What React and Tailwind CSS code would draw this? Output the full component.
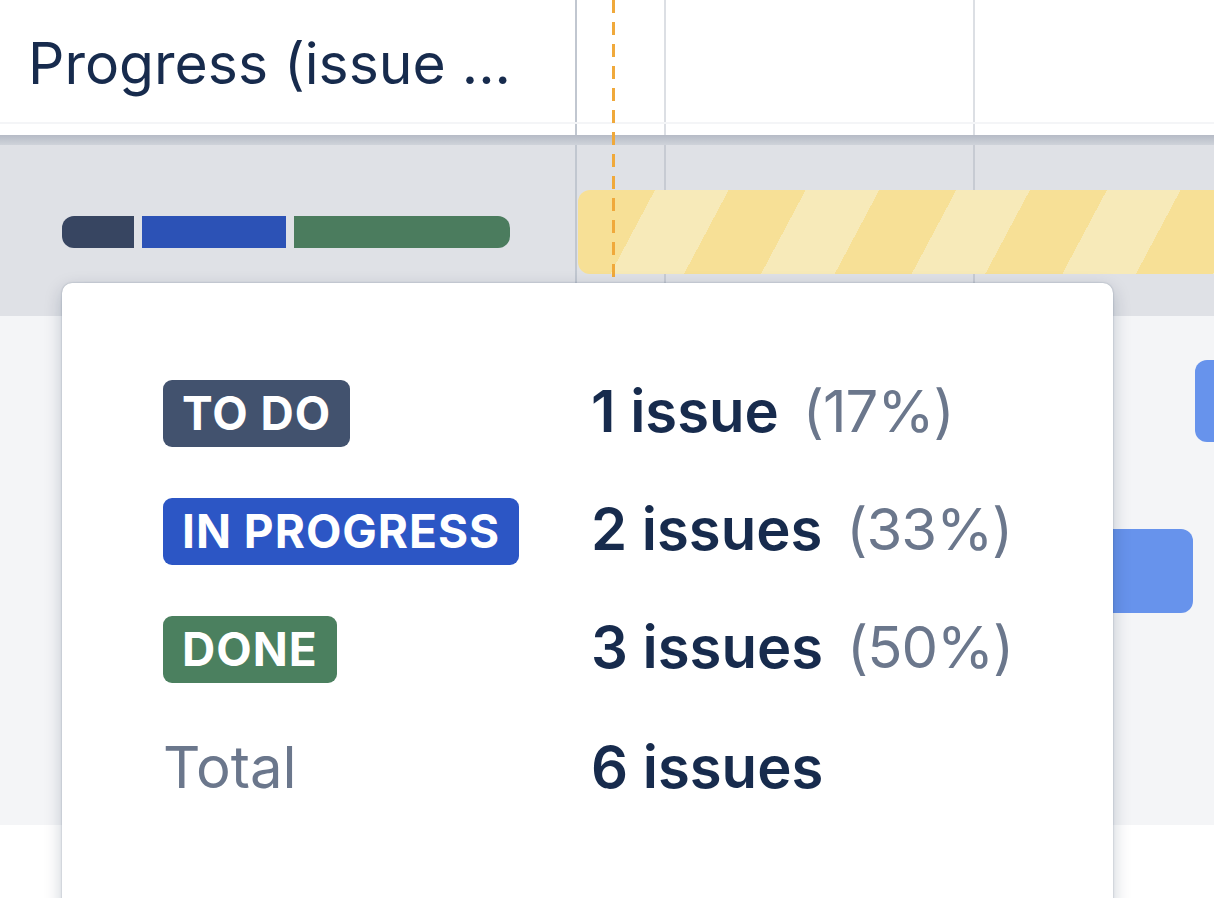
import React from 'react'

const rows = [
    { label: 'TO DO', bg: 'bg-[#42526e]', count: '1 issue', pct: '(17%)' },
    { label: 'IN PROGRESS', bg: 'bg-[#2c56c5]', count: '2 issues', pct: '(33%)' },
    { label: 'DONE', bg: 'bg-[#4b805f]', count: '3 issues', pct: '(50%)' },
]

function GridLines({ dark }) {
    const color = dark ? 'bg-[#c7cbd3]' : 'bg-[#dcdfe4]'
    return (
        <>
            <div className={`absolute left-[87px] top-0 bottom-0 w-[2px] ${color}`} />
            <div className={`absolute left-[396px] top-0 bottom-0 w-[2px] ${color}`} />
        </>
    )
}

function StatusPopup() {
    return (
        <div className="absolute left-[62px] top-[283px] w-[1051px] h-[700px] bg-white rounded-[10px] shadow-[0_6px_18px_rgba(9,30,66,0.22),0_0_2px_rgba(9,30,66,0.3)]">
            <div className="pt-[71px] pl-[101px]">
                {rows.map((r) => (
                    <div key={r.label} className="h-[118px] flex items-center">
                        <div className="w-[428px]">
                            <span className={`inline-flex items-center h-[67px] px-[19px] rounded-[9px] text-white font-bold text-[46px] tracking-[1px] leading-none ${r.bg}`}>
                                {r.label}
                            </span>
                        </div>
                        <div className="flex items-baseline text-[58px] leading-none -mt-[4px]">
                            <span className="font-semibold text-[#172b4d]">{r.count}</span>
                            <span className="ml-[24px] text-[#6b778c] tracking-[-1px]">{r.pct}</span>
                        </div>
                    </div>
                ))}
                <div className="h-[118px] flex items-center">
                    <div className="w-[428px] text-[58px] leading-none text-[#6b778c]">Total</div>
                    <div className="text-[58px] leading-none font-semibold text-[#172b4d]">6 issues</div>
                </div>
            </div>
        </div>
    )
}

export default function App() {
    return (
        <div className="relative w-[1214px] h-[898px] overflow-hidden bg-white font-['Inter',sans-serif]">
            {/* header */}
            <div className="flex h-[122px]">
                <div className="w-[575px] shrink-0 flex items-center pl-[28px] pt-[6px] text-[57px] text-[#172b4d] whitespace-nowrap">
                    Progress (issue ...
                </div>
                <div className="w-[2px] shrink-0 bg-[#c1c7d0]" />
                <div className="relative flex-1">
                    <GridLines />
                </div>
            </div>
            <div className="flex h-[13px] border-t-2 border-[#f4f5f7]">
                <div className="w-[575px] shrink-0" />
                <div className="w-[2px] shrink-0 bg-[#c1c7d0]" />
                <div className="relative flex-1">
                    <GridLines />
                </div>
            </div>
            <div className="h-[10px] bg-[linear-gradient(#b6bbc6,#cfd3da)]" />

            {/* selected row */}
            <div className="flex h-[171px] bg-[#dfe1e6]">
                <div className="w-[575px] shrink-0 flex items-center pl-[62px] pt-[3px]">
                    <div className="flex gap-[8px] h-[32px]">
                        <div className="w-[72px] rounded-l-[12px] bg-[#374561]" />
                        <div className="w-[144px] bg-[#2c52b6]" />
                        <div className="w-[216px] rounded-r-[12px] bg-[#4b7c5e]" />
                    </div>
                </div>
                <div className="w-[2px] shrink-0 bg-[#c1c7d0]" />
                <div className="relative flex-1 min-w-0 flex items-center pl-[1px] pt-[3px]">
                    <GridLines dark />
                    <div className="relative shrink-0 h-[84px] w-[700px] rounded-l-[12px] bg-[repeating-linear-gradient(118deg,#f7e096_0px,#f7e096_68px,#f7eab9_68px,#f7eab9_133px)]" />
                </div>
            </div>

            {/* other rows */}
            <div className="bg-[#f4f5f7]">
                <div className="h-[170px] flex items-center justify-end">
                    <div className="w-[19px] h-[82px] rounded-l-[12px] bg-[#6793ec]" />
                </div>
                <div className="h-[170px] flex items-center">
                    <div className="ml-[1000px] w-[193px] h-[84px] rounded-r-[12px] bg-[#6793ec]" />
                </div>
                <div className="h-[169px]" />
            </div>

            {/* today marker */}
            <div className="absolute left-[612px] top-0 h-[283px] w-[3px] bg-[repeating-linear-gradient(180deg,#f0a93b_0px,#f0a93b_13px,transparent_13px,transparent_22px)]" />

            <StatusPopup />
        </div>
    )
}
